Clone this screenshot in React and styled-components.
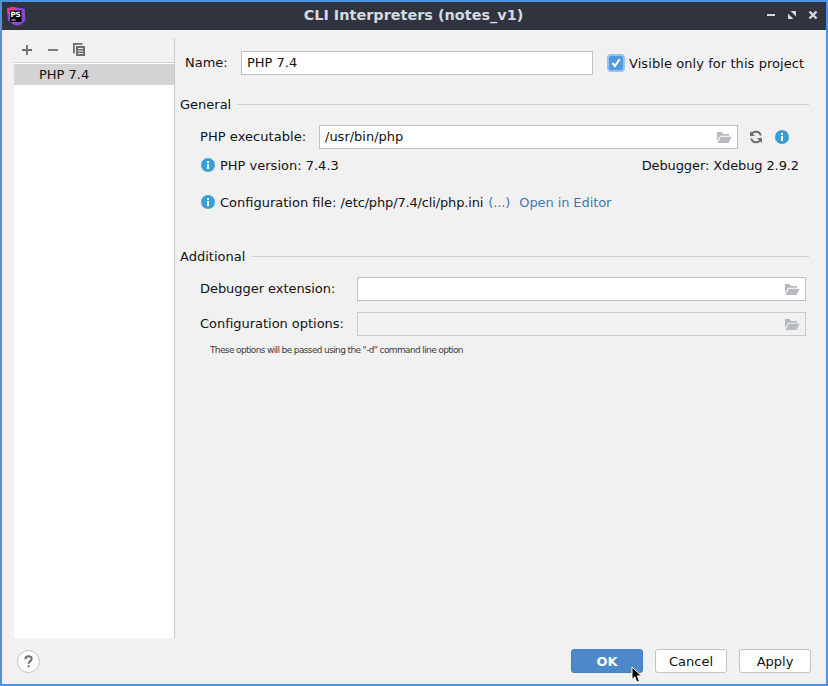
import React from "react";
import styled, { createGlobalStyle } from "styled-components";

const Global = createGlobalStyle`
  *, *::before, *::after { box-sizing: border-box; }
  body { margin: 0; background: #f1f1f1; }
  svg { display: block; flex: none; }
`;

const Dialog = styled.div`
  position: relative;
  display: flex;
  flex-direction: column;
  width: 828px;
  height: 686px;
  border: 2px solid #4f92df;
  background: #f1f1f1;
  color: #111;
  font: 13px/16px "DejaVu Sans", sans-serif;
  white-space: nowrap;
  overflow: hidden;
`;

const TitleBar = styled.header`
  display: grid;
  grid-template-columns: 60px 1fr 60px;
  align-items: center;
  flex: none;
  height: 28px;
  background: #2f343f;
  color: #d3dae3;
`;

const AppIcon = styled.div`
  padding: 0 0 1px 4px;
`;

const Title = styled.h1`
  margin: 0;
  padding: 0 1px 2px 0;
  font-size: 14.45px;
  line-height: 18px;
  font-weight: bold;
  text-align: center;
`;

const WindowControls = styled.div`
  display: flex;
  justify-content: flex-end;
  gap: 11px;
  padding: 0 8px 2px 0;
`;

const Content = styled.main`
  display: flex;
  flex: none;
  height: 608px;
  padding: 8px 17px 0 12px;
`;

const Sidebar = styled.aside`
  display: flex;
  flex-direction: column;
  width: 161px;
  border-right: 1px solid #c9c9c9;
`;

const Toolbar = styled.div`
  display: flex;
  align-items: center;
  gap: 10px;
  height: 25px;
  padding: 0 0 1px 5px;
  border-bottom: 1px solid #cfcfcf;
`;

const InterpreterList = styled.div`
  flex: 1;
  padding-top: 1px;
  background: #fff;
`;

const InterpreterRow = styled.div`
  height: 21px;
  padding: 3px 0 0 25px;
  background: #d4d4d4;
`;

const Form = styled.section`
  display: flex;
  flex-direction: column;
  flex: 1;
  min-width: 0;
  padding: 13px 0 0 5px;
`;

const Row = styled.div`
  display: flex;
  align-items: center;
  height: ${(p) => p.$height || 24}px;
  margin-top: ${(p) => p.$top || 0}px;
  padding-left: ${(p) => p.$indent || 0}px;
  padding-right: ${(p) => p.$end || 0}px;
`;

const Label = styled.label`
  flex: none;
  width: ${(p) => p.$width}px;
  letter-spacing: ${(p) => p.$spacing || 0}px;
`;

const Text = styled.span`
  padding-top: 2px;
  letter-spacing: ${(p) => p.$spacing || 0}px;
  white-space: pre;
`;

const Field = styled.div`
  display: flex;
  align-items: center;
  justify-content: space-between;
  flex: none;
  width: ${(p) => p.$width}px;
  height: 24px;
  padding: 0 5px;
  border: 1px solid ${(p) => (p.$disabled ? "#c9cbcd" : "#bfc1c4")};
  background: ${(p) => (p.$disabled ? "#f1f1f1" : "#fff")};
`;

const CheckBox = styled.span`
  display: flex;
  align-items: center;
  justify-content: center;
  width: 18px;
  height: 18px;
  margin: 0 4px 0 14px;
  border: 2px solid #97c3f0;
  border-radius: 4px;
  background: #4f9ae3;
`;

const GroupTitle = styled.h2`
  display: flex;
  align-items: center;
  gap: ${(p) => p.$gap || 6}px;
  height: 16px;
  margin: ${(p) => p.$top}px 0 0;
  font-size: 13px;
  font-weight: normal;

  &::after {
    content: "";
    flex: 1;
    height: 1px;
    margin-bottom: 1px;
    background: #cdcfcf;
  }
`;

const IconSlot = styled.span`
  margin-left: ${(p) => p.$left || 0}px;
  margin-right: ${(p) => p.$right || 0}px;
`;

const Debugger = styled(Text)`
  margin-left: auto;
`;

const Link = styled.a`
  margin-left: ${(p) => p.$left}px;
  padding-top: 2px;
  color: #3a78b5;
  letter-spacing: -0.1px;
`;

const Hint = styled.p`
  margin: 6px 0 0 30px;
  color: #3c3c3c;
  font-size: 9px;
  letter-spacing: -0.63px;
`;

const Footer = styled.footer`
  display: flex;
  align-items: center;
  gap: 12px;
  padding: 11px 15px 0 15px;
`;

const HelpButton = styled.button`
  display: flex;
  align-items: center;
  justify-content: center;
  width: 23px;
  height: 23px;
  margin: 0 auto 0 0;
  padding: 0;
  border: 1px solid #c0c0c0;
  border-radius: 50%;
  background: #fff;
`;

const Button = styled.button`
  width: 72px;
  height: 24px;
  padding: 1px 0 0;
  border: 1px solid ${(p) => (p.$primary ? "#4580bd" : "#c3c3c3")};
  border-radius: 3px;
  background: ${(p) => (p.$primary ? "#4d89c8" : "#fff")};
  color: ${(p) => (p.$primary ? "#fff" : "#111")};
  font: ${(p) => (p.$primary ? "bold" : "normal")} 13px/16px "DejaVu Sans", sans-serif;
`;

const Pointer = styled.div`
  position: absolute;
  left: 629px;
  top: 664px;
`;

const ProductLogo = () => (
  <svg width="20" height="20" viewBox="0 0 20 20">
    <path d="M1 2.5 7 .8l6 1.2 5.8 1 .2 7 .5 4-4.5 4.5-5 1.2L6 17.5l-4-3Z" fill="#9546d8" />
    <path d="M1 2.5 7 .8l5 3.2-8 6-2.5-3Z" fill="#dc3c91" />
    <path d="m13 2 5.8 1-1 6 1.7 5-4.5 4.5-3-2Z" fill="#7c4bd3" />
    <rect x="4" y="4.5" width="11.5" height="11.5" fill="#08080c" />
    <text x="4.6" y="11" fill="#fff" fontFamily="DejaVu Sans, sans-serif" fontWeight="bold" fontSize="7.2" letterSpacing="-0.3">PS</text>
    <path d="M5.5 14h4" stroke="#ddd" />
  </svg>
);

const Minimize = () => (
  <svg width="10" height="10"><path d="M1 5h8" stroke="#d3dae3" strokeWidth="2" /></svg>
);

const Maximize = () => (
  <svg width="10" height="10" fill="#d3dae3">
    <path d="M3.5 1H9v5.5ZM1 3.5 6.5 9H1Z" />
  </svg>
);

const Close = () => (
  <svg width="10" height="10"><path d="m1.5 1.5 7 7m0-7-7 7" stroke="#d3dae3" strokeWidth="2.4" /></svg>
);

const Plus = () => (
  <svg width="16" height="16"><path d="M3 8h10M8 3v10" stroke="#6e6e6e" strokeWidth="1.8" /></svg>
);

const Minus = () => (
  <svg width="16" height="16"><path d="M3 8h10" stroke="#6e6e6e" strokeWidth="1.8" /></svg>
);

const Copy = () => (
  <svg width="16" height="16">
    <path d="M2.9 11.5V1.9h8.6" fill="none" stroke="#6e6e6e" strokeWidth="1.8" />
    <path d="M5 4h9v10H5Z" fill="#6e6e6e" />
    <path d="M7 6.5h5M7 9h5M7 11.5h5" stroke="#f1f1f1" />
  </svg>
);

const Folder = () => (
  <svg width="16" height="16" fill="#b7bbbe">
    <path d="M1 12.2V3h4.5l1.6 2H13v1.8H4.2Z" />
    <path d="M4.7 7.7h11L12.6 14H1.6Z" />
  </svg>
);

const Refresh = () => (
  <svg width="16" height="16">
    <path d="M3 7.2A5 5 0 0 1 12.8 6.5M13 8.8A5 5 0 0 1 3.2 9.5" fill="none" stroke="#6e6e6e" strokeWidth="1.9" />
    <path d="M2 2v5h5ZM14 14V9H9Z" fill="#6e6e6e" />
  </svg>
);

const Info = () => (
  <svg width="16" height="16">
    <circle cx="8" cy="8" r="7" fill="#389fd6" />
    <path d="M7 4h2v2H7ZM7 7h2v5H7Z" fill="#fff" />
  </svg>
);

const Check = () => (
  <svg width="14" height="14">
    <path d="m3.4 7 2.5 3 4.8-6.8" fill="none" stroke="#fff" strokeWidth="2" />
  </svg>
);

const Question = () => (
  <svg width="21" height="21">
    <path d="M7.4 8.2c0-2 1.2-3 3.1-3s3.2 1 3.2 2.6c0 2.4-3.1 2.3-3.1 5" fill="none" stroke="#6e6e6e" strokeWidth="2" />
    <path d="M9.6 14.3h2v2h-2Z" fill="#6e6e6e" />
  </svg>
);

const Arrow = () => (
  <svg width="14" height="20">
    <path d="M1 1v12.5l2.8-2.7 2 5.3 2.6-1-2.1-5.2h4.2Z" fill="#000" stroke="#fff" />
  </svg>
);

export default function App() {
  return (
    <>
      <Global />
      <Dialog>
        <TitleBar>
          <AppIcon><ProductLogo /></AppIcon>
          <Title>CLI Interpreters (notes_v1)</Title>
          <WindowControls><Minimize /><Maximize /><Close /></WindowControls>
        </TitleBar>
        <Content>
          <Sidebar>
            <Toolbar><Plus /><Minus /><Copy /></Toolbar>
            <InterpreterList>
              <InterpreterRow>PHP 7.4</InterpreterRow>
            </InterpreterList>
          </Sidebar>
          <Form>
            <Row $indent={5}>
              <Label $width={56}>Name:</Label>
              <Field $width={352}>PHP 7.4</Field>
              <CheckBox><Check /></CheckBox>
              <Text $spacing={0.07}>Visible only for this project</Text>
            </Row>
            <GroupTitle $top={22}>General</GroupTitle>
            <Row $top={12} $indent={20}>
              <Label $width={119} $spacing={0.06}>PHP executable:</Label>
              <Field $width={419}>/usr/bin/php<Folder /></Field>
              <IconSlot $left={10}><Refresh /></IconSlot>
              <IconSlot $left={10}><Info /></IconSlot>
            </Row>
            <Row $top={8} $height={16} $indent={20} $end={10}>
              <IconSlot $right={4}><Info /></IconSlot>
              <Text>PHP version: 7.4.3</Text>
              <Debugger $spacing={-0.11}>Debugger: Xdebug 2.9.2</Debugger>
            </Row>
            <Row $top={21} $height={16} $indent={20}>
              <IconSlot $right={4}><Info /></IconSlot>
              <Text>{"Configuration file: "}</Text>
              <Text $spacing={-0.15}>/etc/php/7.4/cli/php.ini</Text>
              <Link $left={5}>(...)</Link>
              <Link $left={9}>Open in Editor</Link>
            </Row>
            <GroupTitle $top={39} $gap={7}>Additional</GroupTitle>
            <Row $top={12} $indent={20}>
              <Label $width={157} $spacing={-0.05}>Debugger extension:</Label>
              <Field $width={449}><span /><Folder /></Field>
            </Row>
            <Row $top={11} $indent={20}>
              <Label $width={157} $spacing={-0.03}>Configuration options:</Label>
              <Field $width={449} $disabled><span /><Folder /></Field>
            </Row>
            <Hint>These options will be passed using the "-d" command line option</Hint>
          </Form>
        </Content>
        <Footer>
          <HelpButton aria-label="Help"><Question /></HelpButton>
          <Button $primary>OK</Button>
          <Button>Cancel</Button>
          <Button>Apply</Button>
        </Footer>
        <Pointer><Arrow /></Pointer>
      </Dialog>
    </>
  );
}
